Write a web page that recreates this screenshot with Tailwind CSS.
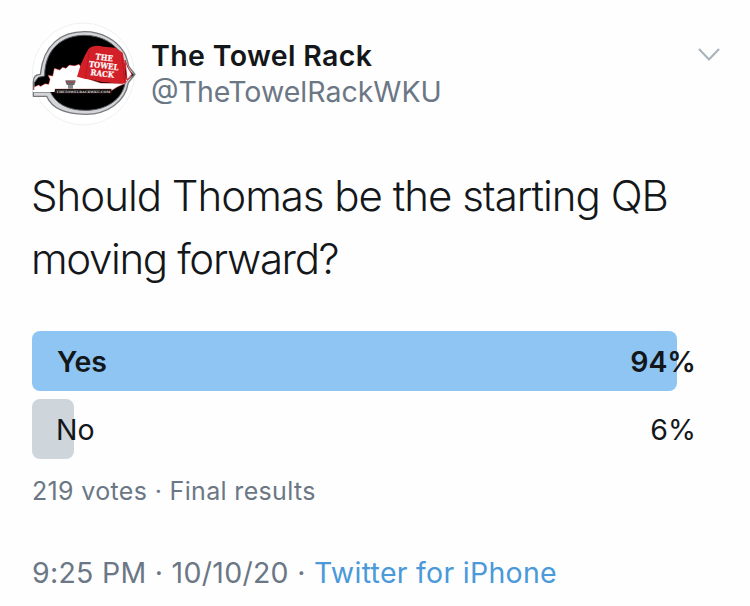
<!DOCTYPE html>
<html lang="en">

<head>
    <meta charset="UTF-8">
    <meta name="viewport" content="width=device-width, initial-scale=1.0">
    <script src="https://cdn.jsdelivr.net/npm/@tailwindcss/browser@4"></script>
    <title>The Towel Rack</title>
</head>

<body class="bg-[#fefefe] font-['Inter',sans-serif] text-[#14171a] whitespace-nowrap overflow-hidden">

    <article class="w-[750px] h-[606px] px-8 pt-[22px]">
        <!-- Author -->
        <header class="flex items-start">
            <svg class="w-[104px] h-[104px] shrink-0" viewBox="24 24 312 312">
                <circle cx="178" cy="180" r="153" fill="#fff" stroke="#e6e8ea" stroke-width="2" />
                <!-- Silver outline of the state, around the disc -->
                <path d="M28 247 V204 C28 190 36 181 49 181 C58 92 112 53 181 53 C236 53 277 80 298 112 C308 124 310 144 315 158 L333 181 L313 206 C304 262 252 301 185 301 C120 301 83 282 68 247 Z" fill="#d4d5d8" stroke="#77797d" stroke-width="4" stroke-linejoin="round" />
                <path d="M31 234 V206 L43 190 L62 186 C62 105 115 64 181 64 C235 64 273 91 292 120 L304 158 L330 182 L304 204 C296 257 246 289 185 289 C130 289 95 268 79 234 Z" fill="#000" stroke="#55575b" stroke-width="3" />
                <path d="M30 230 V219 L44 213 L50 217 L63 209 L74 211 L78 196 L72 184 L86 186 L91 163 L107 168 L116 160 L126 163 L136 153 L152 155 L165 151 L172 160 L166 186 L230 207 L296 208 L315 186 L323 185 L302 209 L280 219 L262 230 Z" fill="#fff" stroke="#d5252c" stroke-width="1.5" />
                <path d="M26 231 H92" stroke="#fff" stroke-width="6" />
                <!-- Towel -->
                <path d="M193 106 C205 94 222 94 238 98 L274 101 L296 116 L302 150 L307 205 C297 212 286 207 274 208 C258 207 247 203 234 204 C220 201 208 198 194 196 C182 195 171 191 159 188 L171 150 L183 124 Z" fill="#d31f27" />
                <path d="M196 110 L184 193 M293 120 L302 205" fill="none" stroke="#ab171e" stroke-width="2" />
                <path d="M303 138 L311 159 L324 181 L309 198 Z" fill="#fff" stroke="#c32229" stroke-width="3" />
                <g fill="#fff" stroke="#fff" stroke-width="0.6" font-family="DejaVu Serif, serif" font-weight="700" font-size="24">
                    <text x="214" y="136" textLength="52" lengthAdjust="spacingAndGlyphs" transform="rotate(7 214 136)">THE</text>
                    <text x="194" y="158" textLength="89" lengthAdjust="spacingAndGlyphs" transform="rotate(7 194 158)">TOWEL</text>
                    <text x="199" y="183" textLength="71" lengthAdjust="spacingAndGlyphs" transform="rotate(7 199 183)">RACK</text>
                </g>
                <!-- Stadium tower -->
                <path d="M124 199 H155 L151 213 H128 Z" fill="#66676a" />
                <path d="M125 204 H154" stroke="#b44146" stroke-width="3" />
                <path d="M132 213 H147 V224 H132 Z" fill="#85868a" />
                <path d="M93 225 H262 V237 H93 Z" fill="#111" stroke="#9c2529" stroke-width="1" />
                <text x="97" y="236" textLength="162" lengthAdjust="spacingAndGlyphs" fill="#c9c9c9" font-family="DejaVu Serif, serif" font-weight="700" font-size="9">THETOWELRACKWKU.COM</text>
            </svg>
            <div class="ml-[15px] pt-4 grow">
                <h1 class="text-[28.5px] leading-9 font-semibold tracking-[0.35px]">The Towel Rack</h1>
                <p class="text-[28.5px] leading-9 text-[#6b7785]">@TheTowelRackWKU</p>
            </div>
            <svg class="w-6 h-4 mt-[25px] -mr-[3px]" viewBox="0 0 24 16" fill="none" stroke="#aab4bb" stroke-width="2.2">
                <path d="M2 2 L12 12.5 L22 2" />
            </svg>
        </header>

        <p class="mt-[38px] -ml-px text-[42px] leading-[63px] font-light">
            <span class="tracking-[-1px]">Should Thomas be the starting QB</span><br>
            <span class="tracking-[-1.35px]">moving forward?</span>
        </p>

        <!-- Poll -->
        <div class="mt-[41px] grid gap-2 w-[686px] text-[28.5px]">
            <div class="grid items-center h-[60px] font-semibold">
                <div class="col-start-1 row-start-1 h-full rounded-lg bg-[#8ec5f3]" style="width: 94%"></div>
                <div class="col-start-1 row-start-1 flex justify-between pt-0.5 pl-[25px] pr-[22px]">
                    <span>Yes</span>
                    <span>94%</span>
                </div>
            </div>
            <div class="grid items-center h-[60px]">
                <div class="col-start-1 row-start-1 h-full rounded-lg bg-[#ced5db]" style="width: 6.1%"></div>
                <div class="col-start-1 row-start-1 flex justify-between pt-0.5 pl-[24px] pr-[22px]">
                    <span>No</span>
                    <span>6%</span>
                </div>
            </div>
        </div>
        <p class="mt-4 text-[25px] leading-8 tracking-[0.34px] text-[#6b7785]">219 votes · Final results</p>

        <p class="mt-[48px] text-[28.5px] leading-9 tracking-[0.28px] text-[#6b7785]">9:25 PM · 10/10/20 · <a class="text-[#4a99d9]">Twitter for iPhone</a></p>
    </article>

</body>

</html>
